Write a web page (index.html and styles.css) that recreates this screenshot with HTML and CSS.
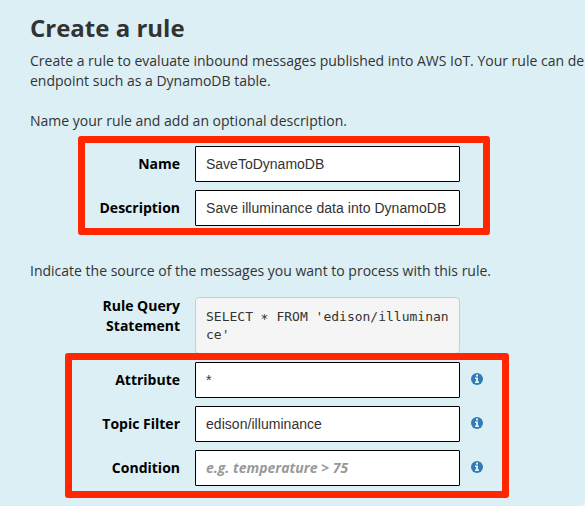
FILE: index.html
```html
<!DOCTYPE html>
<html lang="en">
<head>
<meta charset="utf-8">
<title>Create a rule</title>
<link rel="stylesheet" href="styles.css">
</head>
<body>
<svg class="defs" width="0" height="0" aria-hidden="true">
  <symbol id="info" viewBox="0 0 12 12">
    <circle cx="6" cy="6" r="6" fill="#337ab7"/>
    <path d="M5 1.500h2v2H5zM4 4.500h3v4h1v1.500H4V8.500h1V6H4z" fill="#dceff5"/>
  </symbol>
</svg>
<main class="panel">
  <h1 class="title">Create a rule</h1>
  <p class="intro">Create a rule to evaluate inbound messages published into AWS IoT. Your rule can de<br>endpoint such as a DynamoDB table.</p>
  <p class="text">Name your rule and add an optional description.</p>
  <form class="form">
    <section class="group">
      <div class="row"><label class="label" for="name">Name</label><input class="input" id="name" value="SaveToDynamoDB"></div>
      <div class="row"><label class="label" for="desc">Description</label><input class="input wide" id="desc" value="Save illuminance data into DynamoDB"></div>
      <div class="frame frame-name"></div>
    </section>
    <p class="text source">Indicate the source of the messages you want to process with this rule.</p>
    <div class="row query"><span class="label">Rule Query Statement</span><pre class="code">SELECT ∗ FROM 'edison/illuminance'</pre></div>
    <section class="group">
      <div class="row"><label class="label" for="attr">Attribute</label><input class="input" id="attr" value="*"><svg class="info"><use href="#info"/></svg></div>
      <div class="row"><label class="label" for="topic">Topic Filter</label><input class="input wide" id="topic" value="edison/illuminance"><svg class="info"><use href="#info"/></svg></div>
      <div class="row"><label class="label" for="cond">Condition</label><input class="input" id="cond" placeholder="e.g. temperature &gt; 75"><svg class="info"><use href="#info"/></svg></div>
      <div class="frame frame-source"></div>
    </section>
  </form>
</main>
<div class="corner"></div>
</body>
</html>
```
FILE: styles.css
```css
* { box-sizing: border-box; }
body {
  position: relative;
  margin: 0;
  height: 506px;
  overflow: hidden;
  background: #dceff5;
  color: #333;
  font: 14px/20px "Open Sans", sans-serif;
}
.defs { display: block; }
.panel { padding: 11px 0 0 30px; }
.title { margin: 0 0 6px; font-size: 24px; line-height: 34px; font-weight: 700; }
.intro { margin: 0 0 20px; white-space: nowrap; }
.text { margin: 0; }
.form { padding-top: 15px; }
.group { position: relative; display: grid; gap: 8px; }
.row { display: flex; align-items: center; }
.label { width: 150px; margin-right: 15px; text-align: right; color: #000; font-weight: 700; }
.input {
  width: 265px;
  height: 36px;
  padding: 0 10px;
  border: 1px solid #000;
  border-radius: 1px;
  background: #fff;
  color: #333;
  font: 14px "Liberation Sans", sans-serif;
  outline: 0;
}
.wide { letter-spacing: 0.04px; }
.input::placeholder { color: #999; opacity: 1; font: italic 700 14px "Open Sans", sans-serif; }
.source { margin-top: 35px; }
.query { align-items: flex-start; margin: 15px 0 8px; }
.query .label { padding-left: 60px; }
.code {
  width: 265px;
  height: 57px;
  margin: 1px 0 0;
  padding: 10px;
  border: 1px solid #ccc;
  border-radius: 4px;
  background: #f5f5f5;
  font: 13px/18px "DejaVu Sans Mono", monospace;
  white-space: pre-wrap;
  word-break: break-all;
}
.info { width: 12px; height: 12px; margin: -2px 0 0 11px; }
.frame { position: absolute; border: 7px solid #ff2600; border-radius: 3px; pointer-events: none; }
.frame-name { left: 48px; top: -10px; width: 412px; height: 99px; }
.frame-source { left: 35px; top: -9px; width: 444px; height: 145px; }
.corner { position: absolute; right: 0; bottom: 0; width: 2px; height: 4px; border-top-left-radius: 2px; background: #f4f4f4; }
```
